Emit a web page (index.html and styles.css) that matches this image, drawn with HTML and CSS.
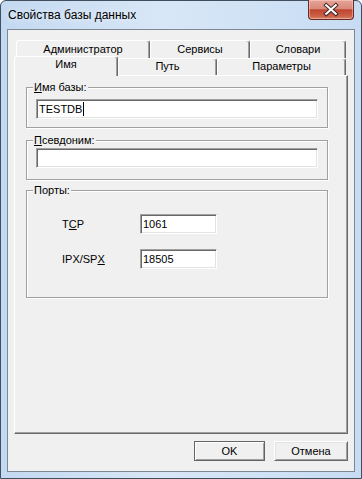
FILE: index.html
```html
<!DOCTYPE html>
<html lang="ru">
<head>
  <meta charset="UTF-8">
  <title>Свойства базы данных</title>
  <link rel="stylesheet" href="styles.css">
</head>
<body>
  <div class="window">
    <div class="titlebar">
      <span class="title">Свойства базы данных</span>
      <button class="close" title="Закрыть">
        <svg width="46" height="20" viewBox="0 0 46 20">
          <path d="M18 5 L28 14 M28 5 L18 14" stroke="#3b2322" stroke-width="4.2" stroke-linecap="square" fill="none"/>
          <path d="M18 5 L28 14 M28 5 L18 14" stroke="#fff" stroke-width="2.2" stroke-linecap="square" fill="none"/>
        </svg>
      </button>
    </div>

    <div class="client">
      <div class="tabs">
        <div class="tab-row back">
          <div class="tab w-admin">Администратор</div>
          <div class="tab w-serv">Сервисы</div>
          <div class="tab w-dict">Словари</div>
        </div>
        <div class="tab-row front">
          <div class="tab active w-name">Имя</div>
          <div class="tab w-path">Путь</div>
          <div class="tab w-params">Параметры</div>
        </div>

        <div class="tab-panel">
          <div class="group g-name">
            <div class="group-title"><u>И</u>мя базы:</div>
            <div class="edit wide">TESTDB<span class="caret"></span></div>
          </div>

          <div class="group g-alias">
            <div class="group-title"><u>П</u>севдоним:</div>
            <div class="edit wide"></div>
          </div>

          <div class="group g-ports">
            <div class="group-title">Порты:</div>
            <div class="port-row first">
              <span class="port-label">T<u>C</u>P</span>
              <div class="edit port">1061</div>
            </div>
            <div class="port-row">
              <span class="port-label">IPX/SP<u>X</u></span>
              <div class="edit port">18505</div>
            </div>
          </div>
        </div>
      </div>

      <div class="buttons">
        <button class="btn default">OK</button>
        <button class="btn cancel">Отмена</button>
      </div>
    </div>
  </div>
</body>
</html>
```

FILE: styles.css
```css
* {
  font-family: 'Liberation Sans', Arial, sans-serif;
}
body {
  margin: 0;
  background: #fff;
}
.window {
  box-sizing: border-box;
  width: 362px;
  height: 479px;
  border: 1px solid #414e5e;
  border-radius: 6px 6px 0 0;
  padding: 0 6px 6px;
  background: linear-gradient(to right, #c3d9f1, #d8e7f7 45%, #c7dcf3);
  display: flex;
  flex-direction: column;
}
.titlebar {
  height: 28px;
  display: flex;
  justify-content: space-between;
  align-items: flex-start;
}
.title {
  font-size: 12px;
  line-height: 28px;
  padding-left: 1px;
  color: #000;
  text-shadow: 0 0 6px rgba(255,255,255,0.9);
}
.close {
  width: 46px;
  height: 20px;
  margin: -1px 1px 0 0;
  padding: 0;
  border: 1px solid #6a2a24;
  border-top: none;
  border-radius: 0 0 4px 4px;
  background: linear-gradient(#e6a497, #d88a7b 45%, #c0452f 52%, #cc6148 85%, #d8856b);
  box-shadow: inset 0 0 0 1px rgba(255,220,210,0.45);
  display: flex;
  align-items: center;
  justify-content: center;
}
.close svg {
  display: block;
}
.client {
  flex: 1;
  background: #f0f0f0;
  border: 1px solid #7d8894;
  font-size: 11px;
  color: #000;
}
.tabs {
  margin: 0 6px;
}
.tab-row {
  display: flex;
  padding-left: 2px;
}
.tab-row.back {
  margin-top: 10px;
  height: 18px;
}
.tab-row.front {
  height: 17px;
  align-items: flex-end;
}
.tab {
  box-sizing: border-box;
  height: 100%;
  border: 1px solid #fff;
  border-bottom: none;
  border-right-color: #696969;
  box-shadow: inset -1px 0 0 #a0a0a0;
  border-radius: 3px 3px 0 0;
  text-align: center;
  line-height: 17px;
  background: #f0f0f0;
}
.front .tab {
  line-height: 15px;
}
.tab.active {
  height: 20px;
  margin: 0 0 -1px -2px;
  position: relative;
  z-index: 1;
}
.w-admin { width: 134px; }
.w-serv { width: 100px; }
.w-dict { width: 96px; }
.w-name { width: 104px; }
.w-path { width: 99px; }
.w-params { width: 129px; }
.tab-panel {
  box-sizing: border-box;
  height: 359px;
  border: 1px solid #fff;
  border-right-color: #696969;
  border-bottom-color: #696969;
  box-shadow: inset -1px -1px 0 #a0a0a0;
  padding-left: 11px;
  overflow: hidden;
}
.group {
  box-sizing: border-box;
  width: 302px;
  border: 1px solid #a0a0a0;
  box-shadow: inset 1px 1px 0 #fff, 1px 1px 0 #fff;
  padding-left: 9px;
}
.group-title {
  width: fit-content;
  margin: -7px 0 0 -3px;
  padding: 0 1px;
  line-height: 13px;
  background: #f0f0f0;
}
.g-name {
  margin-top: 11px;
  height: 41px;
}
.g-alias {
  margin-top: 12px;
  height: 40px;
}
.g-ports {
  margin-top: 10px;
  height: 108px;
}
.edit {
  box-sizing: border-box;
  height: 20px;
  border: 1px solid #a0a0a0;
  border-right-color: #fff;
  border-bottom-color: #fff;
  box-shadow: inset 1px 1px 0 #696969, inset -1px -1px 0 #e3e3e3;
  background: #fff;
  padding: 0 0 0 2px;
  line-height: 18px;
  font-size: 11px;
  white-space: nowrap;
}
.edit.wide {
  width: 282px;
}
.g-name .edit {
  margin-top: 5px;
}
.g-alias .edit {
  margin-top: 1px;
}
.caret {
  display: inline-block;
  width: 1px;
  height: 14px;
  margin-left: 1px;
  background: #000;
  vertical-align: -3px;
}
.port-row {
  display: flex;
  align-items: center;
  padding-left: 26px;
  margin-top: 15px;
}
.port-row.first {
  margin-top: 17px;
}
.port-label {
  width: 78px;
}
.edit.port {
  width: 77px;
}
.buttons {
  display: flex;
  justify-content: flex-end;
  gap: 9px;
  margin: 7px 6px 0 0;
}
.btn {
  box-sizing: border-box;
  height: 20px;
  padding: 0;
  font: inherit;
  font-size: 11px;
  color: #000;
  background: #f0f0f0;
  border: 1px solid #fff;
  border-right-color: #696969;
  border-bottom-color: #696969;
  box-shadow: inset 1px 1px 0 #e3e3e3, inset -1px -1px 0 #a0a0a0;
}
.btn.default {
  width: 71px;
  border: 1px solid #646464;
  box-shadow: inset 1px 1px 0 #fff, inset -1px -1px 0 #a0a0a0;
}
.btn.cancel {
  width: 74px;
}
```
